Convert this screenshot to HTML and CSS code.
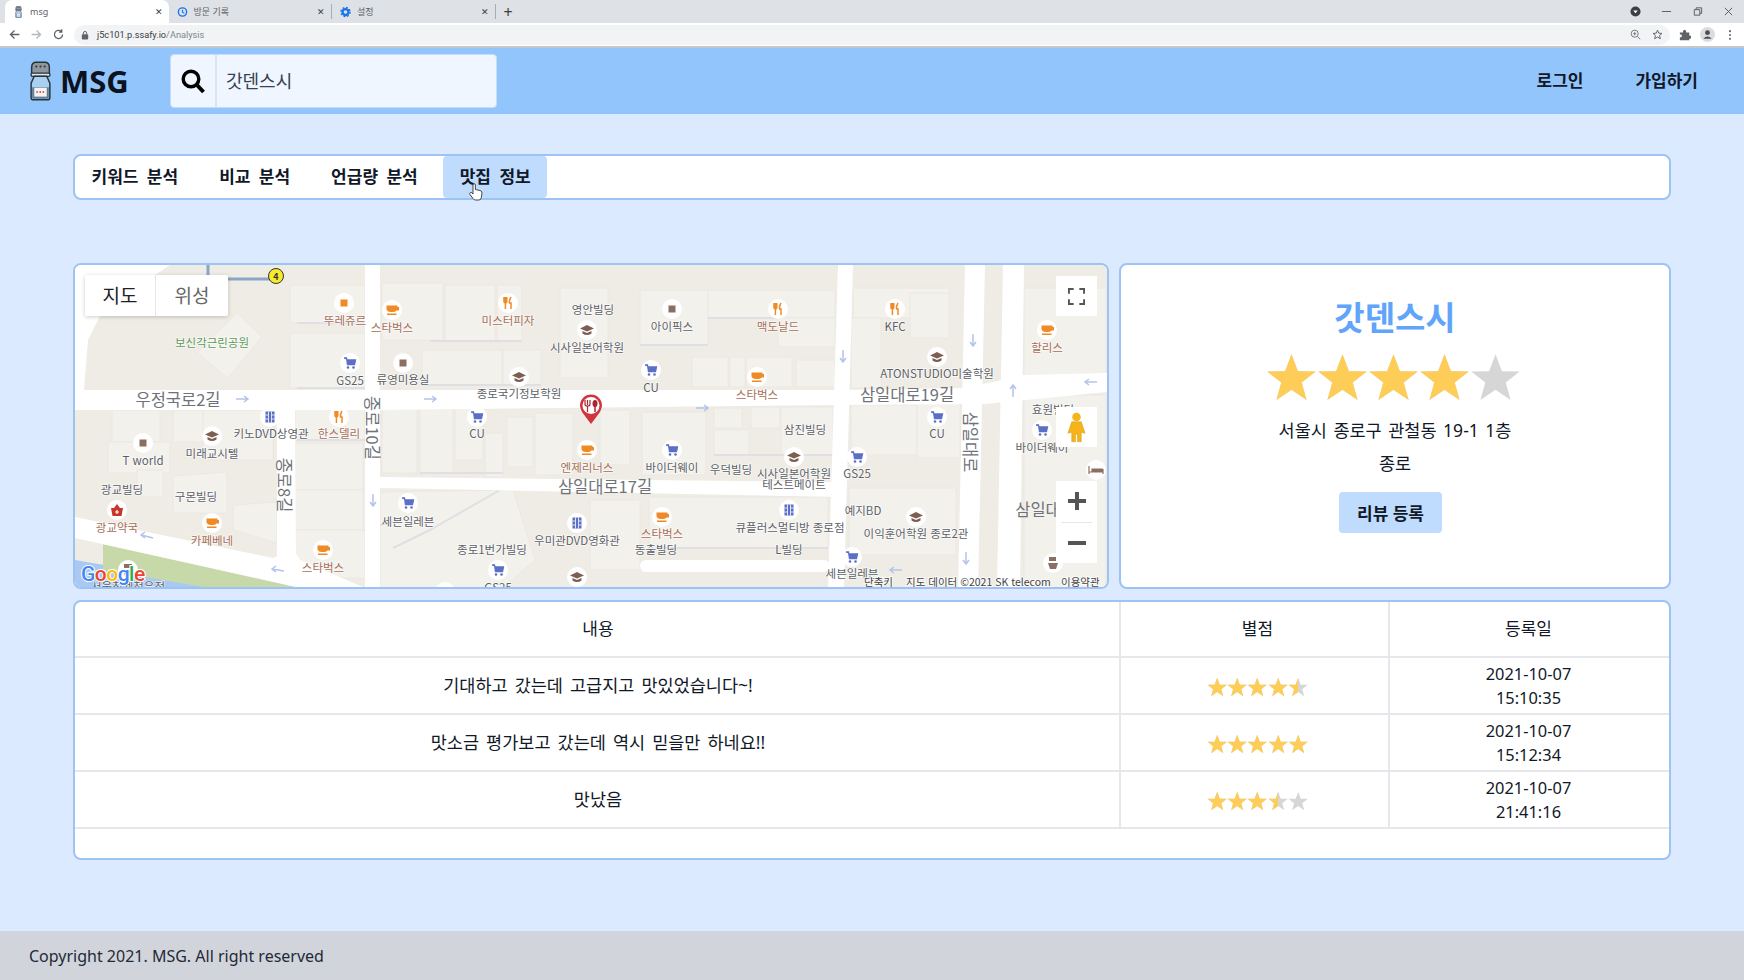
FILE: index.html
```html
<!DOCTYPE html>
<html lang="ko">
<head>
  <meta charset="UTF-8">
  <meta name="viewport" content="width=device-width, initial-scale=1.0">
  <title>msg</title>
  <link rel="stylesheet" href="styles.css">
</head>
<body>
  <svg class="defs" width="0" height="0">
    <defs>
      <g id="star"><polygon points="12,1 15,9 23.4,9.2 16.8,14.4 19.1,22.6 12,17.8 4.9,22.6 7.2,14.4 .6,9.2 9,9"/></g>
      <g id="shaker">
        <path d="M3.500 13V6Q3.500 1 8 1H16Q20.500 1 20.500 6V13Z" fill="#8f979e" stroke="#26343d" stroke-width="1.400"/>
        <rect x="3" y="11.500" width="18" height="3" rx="1" fill="#e3e6e9" stroke="#26343d" stroke-width="1.200"/>
        <path d="M6 14.500H18L21 21V35Q21 37 19 37H5Q3 37 3 35V21Z" fill="#a9d0f0" stroke="#26343d" stroke-width="1.400"/>
        <path d="M4 25H20V35Q20 36 19 36H5Q4 36 4 35Z" fill="#5f7f9a"/>
        <rect x="6" y="25.500" width="12" height="8.500" fill="#f8f3f1"/>
        <path d="M8 29.500H9.500M11 29.500H12.500M14 29.500H15.500" stroke="#c0392b" stroke-width="1.400"/>
        <circle cx="8" cy="5" r="1" fill="#26343d"/><circle cx="12" cy="5" r="1" fill="#26343d"/><circle cx="16" cy="5" r="1" fill="#26343d"/>
      </g>
      <g id="i-shop"><circle r="10" fill="#fff"/><rect x="-3.500" y="-3.500" width="7" height="7" fill="#8d6e63"/></g>
      <g id="i-shop-o"><circle r="10" fill="#fff"/><rect x="-3.500" y="-3.500" width="7" height="7" fill="#f08a24"/></g>
      <g id="i-food"><circle r="10" fill="#fff"/><path d="M-4-6V-1.500Q-4 0-2.600 0V6M-2.600-6V0M-1.200-6V-1.500Q-1.200 0-2.600 0M3-6Q1-3 1.500 0H3V6" fill="none" stroke="#f08a24" stroke-width="1.500"/></g>
      <g id="i-coffee"><circle r="10" fill="#fff"/><path d="M-5.500-4.500H5.500V-3H7V.5H4.500Q3.500 2-1 2Q-4.500 2-5.500-.5ZM-5 3.500H4.500V5H-5Z" fill="#f08a24"/></g>
      <g id="i-cart"><circle r="10" fill="#fff"/><path d="M-6-5H-3.500L-2.500 1.500H4.500L5.500-3H-3" fill="#5b6fc6" stroke="#5b6fc6" stroke-width="1.300"/><circle cx="-2" cy="4.500" r="1.300" fill="#5b6fc6"/><circle cx="3.500" cy="4.500" r="1.300" fill="#5b6fc6"/></g>
      <g id="i-edu"><circle r="10" fill="#fff"/><path d="M0-5L7-1.500L0 1.500L-7-1.500ZM-4.500 1V3.500Q0 6.500 4.500 3.500V1L0 3Z" fill="#7d5f52"/></g>
      <g id="i-film"><circle r="10" fill="#fff"/><rect x="-4.500" y="-5.500" width="9" height="11" fill="#5b6fc6"/><path d="M-1.500-5.500V5.500M1.500-5.500V5.500M-4.500-2H-1.500M-4.500 2H-1.500M1.500-2H4.500M1.500 2H4.500" stroke="#fff" stroke-width=".8"/></g>
      <g id="i-drug"><circle r="10" fill="#fff"/><path d="M-6-2H6L4.500 6H-4.500ZM-3-2L0-6L3-2" fill="#c8352b"/><path d="M0 0V4M-2 2H2" stroke="#fff" stroke-width="1.200"/></g>
      <g id="i-bed"><circle r="10" fill="#fff"/><path d="M-7-4V4M7-1V4M-7 2H7M-4-1H6V2H-4Z" fill="#8d6e63" stroke="#8d6e63" stroke-width="1.200"/></g>
      <g id="i-chef"><circle r="10" fill="#fff"/><path d="M-4-6H4V-2H-4ZM-5 0H5L3 6H-3Z" fill="#8d6e63"/></g>
    </defs>
  </svg>

  <div class="browser">
    <div class="tabs">
      <div class="tab tab-on">
        <svg class="fav" viewBox="0 0 24 38"><use href="#shaker"/></svg>
        <span class="tab-name">msg</span><span class="tab-x">&#x2715;</span>
      </div>
      <div class="tab tab-line">
        <svg class="fav" viewBox="0 0 24 24"><circle cx="12" cy="12" r="9" fill="none" stroke="#1a73e8" stroke-width="3"/><path d="M12 7V12.500L16 15" fill="none" stroke="#1a73e8" stroke-width="2.500"/></svg>
        <span class="tab-name">방문 기록</span><span class="tab-x">&#x2715;</span>
      </div>
      <div class="tab tab-line">
        <svg class="fav" viewBox="0 0 24 24"><circle cx="12" cy="12" r="6.500" fill="none" stroke="#1a73e8" stroke-width="5"/><circle cx="12" cy="12" r="10" fill="none" stroke="#1a73e8" stroke-width="3" stroke-dasharray="4 3.850"/></svg>
        <span class="tab-name">설정</span><span class="tab-x">&#x2715;</span>
      </div>
      <span class="tab-new">+</span>
      <span class="win-btns">
        <svg class="win-rec" viewBox="0 0 12 12"><circle cx="6" cy="6" r="5.500" fill="#3c4043"/><path d="M3.500 5H8.500L6 8Z" fill="#fff"/></svg>
        <svg viewBox="0 0 12 12"><path d="M1 6H11" stroke="#555" stroke-width="1"/></svg>
        <svg viewBox="0 0 12 12"><path d="M2.500 4H8.500V10H2.500ZM4.500 4V2H10.500V8H8.500" fill="none" stroke="#555" stroke-width="1"/></svg>
        <svg viewBox="0 0 12 12"><path d="M2 2L10 10M10 2L2 10" stroke="#555" stroke-width="1"/></svg>
      </span>
    </div>
    <div class="addr">
      <svg class="nav-ico" viewBox="0 0 16 16"><path d="M14 8H3M8 3L3 8L8 13" fill="none" stroke="#5f6368" stroke-width="1.600"/></svg>
      <svg class="nav-ico" viewBox="0 0 16 16"><path d="M2 8H13M8 3L13 8L8 13" fill="none" stroke="#b4b7bb" stroke-width="1.600"/></svg>
      <svg class="nav-ico" viewBox="0 0 16 16"><path d="M13 8A5 5 0 1 1 11.500 4.400M12 1.500V5H8.500" fill="none" stroke="#5f6368" stroke-width="1.600"/></svg>
      <div class="url-pill">
        <svg class="lock" viewBox="0 0 10 12"><rect x="1" y="5" width="8" height="6.500" rx="1" fill="#5f6368"/><path d="M3 5V3.500A2 2 0 0 1 7 3.500V5" fill="none" stroke="#5f6368" stroke-width="1.200"/></svg>
        <span class="url">j5c101.p.ssafy.io<span class="url-path">/Analysis</span></span>
        <svg class="pill-ico" viewBox="0 0 14 14"><circle cx="6" cy="6" r="4.500" fill="none" stroke="#70757a" stroke-width="1.200"/><path d="M9.500 9.500L13 13M4 6H8M6 4V8" stroke="#70757a" stroke-width="1.200"/></svg>
        <svg class="pill-ico" viewBox="0 0 14 14"><polygon points="7,1.500 8.600,5.300 12.700,5.600 9.600,8.300 10.600,12.400 7,10.200 3.400,12.400 4.400,8.300 1.300,5.600 5.400,5.300" fill="none" stroke="#5f6368" stroke-width="1.200"/></svg>
      </div>
      <svg class="ext" viewBox="0 0 14 14"><path d="M1 4H4.500Q4.500 1 6.500 1T8.500 4H12V7.500Q14.500 7.500 14.500 9.500T12 11.500V13H1V10Q3.500 10 3.500 8T1 6Z" fill="#5f6368"/></svg>
      <svg class="avatar" viewBox="0 0 16 16"><circle cx="8" cy="8" r="8" fill="#dadce0"/><circle cx="8" cy="6" r="2.600" fill="#4a4d51"/><path d="M3.500 12.500Q8 8 12.500 12.500Z" fill="#4a4d51"/></svg>
      <svg class="kebab" viewBox="0 0 4 14"><circle cx="2" cy="2.500" r="1.200" fill="#5f6368"/><circle cx="2" cy="7" r="1.200" fill="#5f6368"/><circle cx="2" cy="11.500" r="1.200" fill="#5f6368"/></svg>
    </div>
  </div>

  <header class="site-head">
    <a class="logo">
      <svg class="logo-ico" viewBox="0 0 24 38"><use href="#shaker"/></svg>
      <span>MSG</span>
    </a>
    <div class="search">
      <span class="search-btn">
        <svg viewBox="0 0 24 25"><circle cx="10" cy="10" r="7.800" fill="none" stroke="#000" stroke-width="3.400"/><path d="M15.500 15.500L22.500 23" stroke="#000" stroke-width="4"/></svg>
      </span>
      <span class="search-text">갓덴스시</span>
    </div>
    <nav class="auth">
      <a>로그인</a>
      <a>가입하기</a>
    </nav>
  </header>

  <main class="content">
    <div class="menu card">
      <a class="menu-item">키워드 분석</a>
      <a class="menu-item">비교 분석</a>
      <a class="menu-item">언급량 분석</a>
      <a class="menu-item menu-on">맛집 정보</a>
      <svg class="hand" viewBox="0 0 14 18"><path d="M4 9V2Q4 .7 5.200 .7T6.400 2V6.500L11 7.500Q13 8 13 10L12.300 14.500Q12 17 10 17H6.500Q5 17 4 15.500L1 11.500Q.3 10 1.500 9.500T4 11Z" fill="#fff" stroke="#333" stroke-width=".9"/></svg>
    </div>

    <section class="top-row">
      <div class="map card">
        <svg class="map-svg" viewBox="75 265 1032 322">
          <rect x="75" y="265" width="1032" height="322" fill="#efece5"/>

          <!-- 건물 -->
          <g class="blocks">
            <rect x="290" y="285" width="75" height="38"/><rect x="290" y="333" width="75" height="55"/>
            <rect x="382" y="283" width="61" height="57"/><rect x="445" y="285" width="50" height="57"/>
            <rect x="497" y="285" width="25" height="57"/><rect x="422" y="350" width="80" height="35"/>
            <rect x="503" y="350" width="38" height="35"/><polygon points="197,353 237,313 262,337 228,378"/>
            <rect x="112" y="410" width="48" height="32"/><rect x="108" y="442" width="62" height="31"/>
            <rect x="173" y="410" width="30" height="32"/><rect x="203" y="410" width="70" height="50"/>
            <rect x="137" y="470" width="26" height="27"/><polygon points="173,476 227,472 227,513 173,513"/>
            <polygon points="233,505 277,502 277,543 233,530"/><rect x="295" y="407" width="70" height="33"/>
            <rect x="295" y="443" width="68" height="47"/><rect x="295" y="490" width="68" height="40"/>
            <rect x="295" y="530" width="70" height="48"/><rect x="382" y="405" width="35" height="68"/>
            <rect x="420" y="405" width="33" height="68"/><rect x="455" y="405" width="28" height="55"/>
            <rect x="485" y="433" width="18" height="44"/><rect x="507" y="417" width="26" height="50"/>
            <rect x="535" y="413" width="38" height="62"/><polygon points="380,492 513,490 535,560 500,590 380,590"/>
            <rect x="640" y="290" width="68" height="55"/><rect x="708" y="290" width="127" height="28"/>
            <rect x="778" y="318" width="57" height="29"/><rect x="692" y="357" width="36" height="30"/>
            <rect x="730" y="357" width="15" height="30"/><rect x="746" y="357" width="46" height="30"/>
            <rect x="796" y="360" width="39" height="27"/><rect x="560" y="288" width="48" height="90"/>
            <rect x="642" y="412" width="64" height="63"/><rect x="714" y="408" width="28" height="20"/>
            <rect x="714" y="430" width="35" height="25"/><rect x="751" y="407" width="29" height="21"/>
            <rect x="781" y="407" width="52" height="48"/><rect x="851" y="405" width="66" height="50"/>
            <rect x="917" y="402" width="43" height="56"/><rect x="853" y="288" width="96" height="30"/>
            <rect x="910" y="293" width="39" height="45"/><rect x="851" y="318" width="30" height="70"/>
            <rect x="1024" y="288" width="82" height="90"/><rect x="1024" y="395" width="82" height="195"/>
            <rect x="649" y="497" width="179" height="51"/><rect x="849" y="488" width="107" height="67"/>
            <rect x="600" y="410" width="30" height="55"/><rect x="590" y="500" width="50" height="70"/>
          </g>
          <g class="shades">
            <path d="M297 323H365M430 341H522M422 385H541M297 388H365M708 318H775M640 345H708M297 440H365M420 473H503M714 455H833M1024 378H1100M649 548H828"/>
            <path d="M393 548L430 530M430 530L500 490M380 525L400 520"/>
          </g>

          <!-- 길 -->
          <polygon class="water" points="75,560 240,588 75,588"/>
          <polygon class="grass" points="103,544 300,588 210,588 103,570"/>
          <g class="roads">
            <polygon points="75,265 170,265 103,310 88,340 84,390 75,390"/>
            <polygon points="75,390 840,390 965,388 1024,375 1107,373 1107,392 985,404 840,405 370,410 75,410"/>
            <polygon points="75,517 273,558 293,548 300,560 370,590 310,590 75,538"/>
            <polygon points="277,405 295,405 296,560 277,558"/>
            <polygon points="365,265 380,265 380,590 365,590"/>
            <polygon points="380,477 840,482 840,497 380,488"/>
            <polygon points="838,265 853,265 844,590 828,590"/>
            <polygon points="965,265 985,265 978,590 958,590"/>
            <polygon points="1003,265 1024,265 1020,590 997,590"/>
            <rect x="640" y="560" width="190" height="12" rx="6"/>
          </g>
          <path class="route" d="M208 265V279H276"/>
          <circle cx="276" cy="276" r="7.500" fill="#f7e92e" stroke="#333" stroke-width="1"/>
          <text class="lbl route-num" x="276" y="276">4</text>

          <!-- 일방통행 화살표 -->
          <g class="arrows">
            <path d="M236 399H248M244 396L248 399L244 402M424 399H436M432 396L436 399L432 402M696 408H708M704 405L708 408L704 411"/>
            <path d="M843 350V362M840 358L843 362L846 358M973 334V346M970 342L973 346L976 342M373 494V506M370 502L373 506L376 502M966 552V564M963 560L966 564L969 560"/>
            <path d="M1013 397V385M1010 389L1013 385L1016 389M1097 382H1085M1089 379L1085 382L1089 385M153 538L141 535M145 532L141 535L145 538M284 571L272 569M276 566L272 569L276 572M902 570H890M894 567L890 570L894 573"/>
          </g>

          <!-- 아이콘 -->
          <use href="#i-shop-o" x="344" y="303"/><use href="#i-coffee" x="392" y="310"/><use href="#i-food" x="508" y="303"/>
          <use href="#i-cart" x="350" y="363"/><use href="#i-shop" x="403" y="363"/><use href="#i-edu" x="519" y="377"/>
          <use href="#i-film" x="270" y="417"/><use href="#i-food" x="339" y="417"/><use href="#i-cart" x="477" y="417"/>
          <use href="#i-edu" x="212" y="436"/><use href="#i-shop" x="143" y="443"/><use href="#i-drug" x="117" y="510"/>
          <use href="#i-coffee" x="212" y="523"/><use href="#i-cart" x="408" y="503"/><use href="#i-coffee" x="323" y="550"/>
          <use href="#i-cart" x="498" y="570"/><use href="#i-chef" x="128" y="570"/><use href="#i-coffee" x="445" y="592"/>
          <use href="#i-edu" x="577" y="577"/><use href="#i-shop" x="672" y="309"/><use href="#i-food" x="778" y="309"/>
          <use href="#i-food" x="895" y="309"/><use href="#i-edu" x="587" y="330"/><use href="#i-cart" x="651" y="370"/>
          <use href="#i-coffee" x="757" y="377"/><use href="#i-edu" x="937" y="357"/><use href="#i-coffee" x="1047" y="330"/>
          <use href="#i-cart" x="937" y="417"/><use href="#i-cart" x="1042" y="430"/><use href="#i-coffee" x="587" y="450"/>
          <use href="#i-cart" x="672" y="450"/><use href="#i-edu" x="794" y="457"/><use href="#i-cart" x="857" y="457"/>
          <use href="#i-film" x="789" y="510"/><use href="#i-film" x="577" y="523"/><use href="#i-coffee" x="662" y="517"/>
          <use href="#i-edu" x="916" y="517"/><use href="#i-cart" x="852" y="557"/><use href="#i-bed" x="1096" y="470"/>
          <use href="#i-chef" x="1053" y="563"/>

          <!-- 라벨 -->
          <g class="lbl">
            <text x="350" y="380">GS25</text><text x="403" y="379">류영미용실</text><text x="519" y="393">종로국기정보학원</text>
            <text x="271" y="433">키노DVD상영관</text><text x="477" y="433">CU</text><text x="212" y="453">미래교시텔</text>
            <text x="143" y="460">T world</text><text x="122" y="489">광교빌딩</text><text x="196" y="496">구몬빌딩</text>
            <text x="408" y="521">세븐일레븐</text><text x="492" y="549">종로1번가빌딩</text><text x="577" y="540">우미관DVD영화관</text>
            <text x="498" y="587">GS25</text><text x="128" y="586">서울청계천우정</text><text x="593" y="309">영안빌딩</text>
            <text x="672" y="326">아이픽스</text><text x="895" y="326">KFC</text><text x="587" y="347">시사일본어학원</text>
            <text x="651" y="387">CU</text><text x="937" y="373">ATONSTUDIO미술학원</text><text x="937" y="433">CU</text>
            <text x="1053" y="409">효원빌딩</text><text x="1042" y="447">바이더웨이</text><text x="805" y="429">삼진빌딩</text>
            <text x="672" y="467">바이더웨이</text><text x="731" y="469">우덕빌딩</text><text x="794" y="473">시사일본어학원</text>
            <text x="794" y="484">테스트메이트</text><text x="857" y="473">GS25</text><text x="863" y="510">예지BD</text>
            <text x="656" y="549">동출빌딩</text><text x="790" y="527">큐플러스멀티방 종로점</text><text x="916" y="533">이익훈어학원 종로2관</text>
            <text x="789" y="549">L빌딩</text><text x="852" y="573">세븐일레븐</text>
          </g>
          <g class="lbl lbl-food">
            <text x="345" y="320">뚜레쥬르</text><text x="392" y="327">스타벅스</text><text x="508" y="320">미스터피자</text>
            <text x="339" y="433">한스델리</text><text x="117" y="527">광교약국</text><text x="212" y="540">카페베네</text>
            <text x="323" y="567">스타벅스</text><text x="778" y="326">맥도날드</text><text x="1047" y="347">할리스</text>
            <text x="757" y="394">스타벅스</text><text x="587" y="467">엔제리너스</text><text x="662" y="533">스타벅스</text>
          </g>
          <text class="lbl lbl-park" x="212" y="342">보신각근린공원</text>
          <g class="lbl lbl-road">
            <text x="178" y="399">우정국로2길</text><text x="907" y="394">삼일대로19길</text>
            <text x="605" y="486">삼일대로17길</text><text x="1038" y="509">삼일대</text>
            <text transform="translate(373 428) rotate(90)">종로10길</text>
            <text transform="translate(285 485) rotate(90)">종로8길</text>
            <text transform="translate(971 442) rotate(90)">삼일대로</text>
          </g>

          <!-- 핀 -->
          <path d="M591 424L582 412Q580 408 580 405.500A11 11 0 0 1 602 405.500Q602 408 600 412Z" fill="#d0343c"/>
          <circle cx="591" cy="405.500" r="8.500" fill="#fff"/>
          <path d="M585 400V404Q585 406 587 406H587.500V412M590 400V404Q590 406 588 406M587.500 400V405" fill="none" stroke="#a9262e" stroke-width="1.200"/>
          <path d="M595 406V412" stroke="#a9262e" stroke-width="1.500"/>
          <ellipse cx="595" cy="403.500" rx="2.500" ry="3.500" fill="#a9262e"/>

          <text class="g-logo" y="581"><tspan x="81" fill="#4285f4">G</tspan><tspan fill="#ea4335">o</tspan><tspan fill="#fbbc05">o</tspan><tspan fill="#4285f4">g</tspan><tspan fill="#34a853">l</tspan><tspan fill="#ea4335">e</tspan></text>

          <g class="attr">
            <text x="864" y="581">단축키</text>
            <text x="906" y="581">지도 데이터 ©2021 SK telecom</text>
            <text x="1061" y="581">이용약관</text>
          </g>
        </svg>

        <div class="map-type">
          <span class="map-type-on">지도</span>
          <span>위성</span>
        </div>
        <button class="map-btn map-full">
          <svg viewBox="0 0 18 18"><path d="M1 6V1H6M12 1H17V6M17 12V17H12M6 17H1V12" fill="none" stroke="#555" stroke-width="2"/></svg>
        </button>
        <button class="map-btn map-peg">
          <svg viewBox="0 0 20 32"><circle cx="10" cy="5" r="4.500" fill="#f4b41a"/><path d="M5 10H15L19 22L15 21V31H11V23H9V31H5V21L1 22Z" fill="#f4b41a" stroke="#d39512" stroke-width=".5"/></svg>
        </button>
        <div class="map-zoom">
          <button class="map-z"><svg viewBox="0 0 18 18"><path d="M9 0V18M0 9H18" stroke="#555" stroke-width="4"/></svg></button>
          <button class="map-z map-z-low"><svg viewBox="0 0 18 18"><path d="M0 9H18" stroke="#555" stroke-width="4"/></svg></button>
        </div>
      </div>

      <div class="info card">
        <h2 class="info-name">갓덴스시</h2>
        <div class="stars stars-big">
          <div class="star-row star-off"><svg viewBox="0 0 24 24"><use href="#star"/></svg><svg viewBox="0 0 24 24"><use href="#star"/></svg><svg viewBox="0 0 24 24"><use href="#star"/></svg><svg viewBox="0 0 24 24"><use href="#star"/></svg><svg viewBox="0 0 24 24"><use href="#star"/></svg></div>
          <div class="star-fill" style="width: 80%"><div class="star-row star-on"><svg viewBox="0 0 24 24"><use href="#star"/></svg><svg viewBox="0 0 24 24"><use href="#star"/></svg><svg viewBox="0 0 24 24"><use href="#star"/></svg><svg viewBox="0 0 24 24"><use href="#star"/></svg><svg viewBox="0 0 24 24"><use href="#star"/></svg></div></div>
        </div>
        <p class="info-line">서울시 종로구 관철동 19-1 1층</p>
        <p class="info-line">종로</p>
        <button class="review-btn">리뷰 등록</button>
      </div>
    </section>

    <section class="reviews card">
      <table class="review-table">
        <colgroup><col class="col-text"><col class="col-star"><col class="col-date"></colgroup>
        <thead>
          <tr><th>내용</th><th>별점</th><th>등록일</th></tr>
        </thead>
        <tbody>
          <tr>
            <td class="review-text">기대하고 갔는데 고급지고 맛있었습니다~!</td>
            <td>
              <div class="stars">
                <div class="star-row star-off"><svg viewBox="0 0 24 24"><use href="#star"/></svg><svg viewBox="0 0 24 24"><use href="#star"/></svg><svg viewBox="0 0 24 24"><use href="#star"/></svg><svg viewBox="0 0 24 24"><use href="#star"/></svg><svg viewBox="0 0 24 24"><use href="#star"/></svg></div>
                <div class="star-fill" style="width: 90%"><div class="star-row star-on"><svg viewBox="0 0 24 24"><use href="#star"/></svg><svg viewBox="0 0 24 24"><use href="#star"/></svg><svg viewBox="0 0 24 24"><use href="#star"/></svg><svg viewBox="0 0 24 24"><use href="#star"/></svg><svg viewBox="0 0 24 24"><use href="#star"/></svg></div></div>
              </div>
            </td>
            <td class="review-date">2021-10-07<br>15:10:35</td>
          </tr>
          <tr>
            <td class="review-text">맛소금 평가보고 갔는데 역시 믿을만 하네요!!</td>
            <td>
              <div class="stars">
                <div class="star-row star-off"><svg viewBox="0 0 24 24"><use href="#star"/></svg><svg viewBox="0 0 24 24"><use href="#star"/></svg><svg viewBox="0 0 24 24"><use href="#star"/></svg><svg viewBox="0 0 24 24"><use href="#star"/></svg><svg viewBox="0 0 24 24"><use href="#star"/></svg></div>
                <div class="star-fill" style="width: 100%"><div class="star-row star-on"><svg viewBox="0 0 24 24"><use href="#star"/></svg><svg viewBox="0 0 24 24"><use href="#star"/></svg><svg viewBox="0 0 24 24"><use href="#star"/></svg><svg viewBox="0 0 24 24"><use href="#star"/></svg><svg viewBox="0 0 24 24"><use href="#star"/></svg></div></div>
              </div>
            </td>
            <td class="review-date">2021-10-07<br>15:12:34</td>
          </tr>
          <tr>
            <td class="review-text">맛났음</td>
            <td>
              <div class="stars">
                <div class="star-row star-off"><svg viewBox="0 0 24 24"><use href="#star"/></svg><svg viewBox="0 0 24 24"><use href="#star"/></svg><svg viewBox="0 0 24 24"><use href="#star"/></svg><svg viewBox="0 0 24 24"><use href="#star"/></svg><svg viewBox="0 0 24 24"><use href="#star"/></svg></div>
                <div class="star-fill" style="width: 70%"><div class="star-row star-on"><svg viewBox="0 0 24 24"><use href="#star"/></svg><svg viewBox="0 0 24 24"><use href="#star"/></svg><svg viewBox="0 0 24 24"><use href="#star"/></svg><svg viewBox="0 0 24 24"><use href="#star"/></svg><svg viewBox="0 0 24 24"><use href="#star"/></svg></div></div>
              </div>
            </td>
            <td class="review-date">2021-10-07<br>21:41:16</td>
          </tr>
        </tbody>
      </table>
    </section>
  </main>

  <footer class="site-foot">Copyright 2021. MSG. All right reserved</footer>
</body>
</html>
```

FILE: styles.css
```css
* {
  box-sizing: border-box;
}
body {
  margin: 0;
  height: 980px;
  display: flex;
  flex-direction: column;
  overflow: hidden;
  background-color: #dbeafe;
  color: #111827;
  font-family: "Noto Sans", "Noto Sans CJK KR", sans-serif;
  font-size: 16px;
}
.defs {
  position: absolute;
}
p, h2 {
  margin: 0;
}

/* 브라우저 상단 */
.browser {
  flex: none;
  height: 48px;
  background-color: #fff;
  border-bottom: 2px solid #c4c7cb;
}
.tabs {
  height: 23px;
  display: flex;
  align-items: center;
  padding-left: 5px;
  background-color: #dee1e6;
}
.tab {
  width: 163.500px;
  height: 23px;
  display: flex;
  align-items: center;
  padding: 0 3px 0 8px;
  font-size: 9px;
  color: #5f6368;
}
.tab-on {
  background-color: #fff;
  border-radius: 7px 7px 0 0;
}
.tab-line {
  height: 15px;
  border-right: 1px solid #a9adb2;
}
.fav {
  width: 11px;
  height: 12px;
  margin-right: 6px;
}
.tab-name {
  flex: 1;
}
.tab-x {
  font-size: 9px;
  color: #3c4043;
  margin-right: 3px;
}
.tab-new {
  margin-left: 8px;
  font-size: 16px;
  line-height: 1;
  color: #3c4043;
}
.win-btns {
  margin-left: auto;
  margin-right: 10px;
  display: flex;
  align-items: center;
  gap: 20px;
}
.win-btns svg {
  width: 11px;
  height: 11px;
}
.addr {
  height: 23px;
  display: flex;
  align-items: center;
  padding-left: 8px;
}
.nav-ico {
  width: 13px;
  height: 13px;
  margin-right: 9px;
}
.url-pill {
  width: 1596px;
  height: 20px;
  display: flex;
  align-items: center;
  padding: 0 7px;
  background-color: #f1f3f4;
  border-radius: 10px;
  font-family: "Roboto", sans-serif;
  font-size: 9.200px;
  color: #3c4043;
}
.lock {
  width: 8px;
  height: 10px;
  margin-right: 8px;
}
.url {
  flex: 1;
}
.url-path {
  color: #80868b;
}
.pill-ico {
  width: 11px;
  height: 11px;
  margin-left: 11px;
}
.ext {
  width: 12px;
  height: 12px;
  margin-left: 9px;
}
.avatar {
  width: 15px;
  height: 15px;
  margin-left: 9px;
}
.kebab {
  width: 4px;
  height: 12px;
  margin-left: 13px;
}

/* 헤더 */
.site-head {
  flex: none;
  height: 66px;
  display: flex;
  align-items: center;
  padding: 0 46px 0 28px;
  background-color: #93c5fd;
}
.logo {
  display: flex;
  align-items: center;
  width: 142px;
  gap: 7px;
  font-size: 31px;
  font-weight: 700;
  color: #0b1220;
}
.logo-ico {
  width: 25px;
  height: 40px;
}
.search {
  width: 327px;
  height: 54px;
  display: flex;
  background-color: #eff6ff;
  border: 1px solid #c6dcf7;
  border-radius: 4px;
}
.search-btn {
  width: 46px;
  display: flex;
  align-items: center;
  justify-content: center;
  border-right: 2px solid #d9e4f1;
}
.search-btn svg {
  width: 24px;
  height: 25px;
}
.search-text {
  align-self: center;
  margin: 0 0 3px 9px;
  font-size: 18px;
  color: #374151;
}
.auth {
  margin-left: auto;
  padding-bottom: 3px;
  display: flex;
  gap: 52px;
  font-size: 17px;
  font-weight: 700;
}

/* 본문 */
.content {
  flex: 1;
  padding: 40px 73px 0 73px;
}
.card {
  background-color: #fff;
  border: 2px solid #9dc3f5;
  border-radius: 8px;
}
.menu {
  position: relative;
  height: 46px;
  display: flex;
  gap: 8px;
}
.menu-item {
  padding: 0 16.500px;
  font-size: 17px;
  font-weight: 700;
  line-height: 42px;
  word-spacing: 4px;
}
.menu-on {
  margin-left: 1px;
  background-color: #bfdbfe;
  border-radius: 4px;
}
.hand {
  position: absolute;
  left: 394px;
  top: 27px;
  width: 14px;
  height: 18px;
}
.top-row {
  display: flex;
  gap: 10px;
  margin-top: 63px;
  height: 326px;
}
.map {
  position: relative;
  width: 1036px;
  overflow: hidden;
}
.map-svg {
  display: block;
  width: 1032px;
  height: 322px;
}
.blocks {
  fill: #f3f1ec;
  stroke: #ece8e1;
  stroke-width: 1;
}
.shades {
  fill: none;
  stroke: #e0dfe4;
  stroke-width: 2;
}
.roads {
  fill: #fff;
}
.water {
  fill: #a9c9f2;
}
.grass {
  fill: #c8d9a9;
}
.route {
  fill: none;
  stroke: #89a6c8;
  stroke-width: 3;
}
.arrows {
  fill: none;
  stroke: #b5c3ea;
  stroke-width: 1.500;
}
.lbl {
  fill: #5b6168;
  font-family: "Noto Sans CJK KR", sans-serif;
  font-size: 11.500px;
  text-anchor: middle;
  dominant-baseline: central;
  paint-order: stroke;
  stroke: #fff;
  stroke-width: 1.500px;
  stroke-opacity: .7;
}
.route-num {
  fill: #333;
  stroke: none;
  font-size: 9px;
  font-weight: 700;
}
.lbl-food {
  fill: #a56f58;
}
.lbl-park {
  fill: #5d9a5a;
}
.lbl-road {
  fill: #6f7378;
  font-size: 16.500px;
  stroke: none;
}
.g-logo {
  font-family: "Roboto", sans-serif;
  font-size: 21px;
  font-weight: 500;
  paint-order: stroke;
  stroke: #fff;
  stroke-width: 2px;
  letter-spacing: -.5px;
}
.attr {
  fill: #444;
  font-family: "Noto Sans CJK KR", sans-serif;
  font-size: 10.500px;
  dominant-baseline: central;
  paint-order: stroke;
  stroke: #fff;
  stroke-width: 2px;
  stroke-opacity: .7;
}
.map-type {
  position: absolute;
  left: 10px;
  top: 10px;
  width: 143px;
  height: 41px;
  display: flex;
  background-color: #fff;
  border-radius: 2px;
  box-shadow: 0 1px 4px rgba(0, 0, 0, .2);
  font-size: 19px;
  line-height: 42px;
  text-align: center;
  color: #666;
}
.map-type span {
  flex: 1;
}
.map-type .map-type-on {
  flex: none;
  width: 71px;
  color: #222;
  border-right: 1px solid #e6e6e6;
}
.map-btn {
  position: absolute;
  left: 981px;
  width: 41px;
  height: 40px;
  padding: 0;
  border: none;
  background-color: #fff;
  display: flex;
  align-items: center;
  justify-content: center;
}
.map-full {
  top: 11px;
}
.map-full svg {
  width: 17px;
  height: 17px;
}
.map-peg {
  top: 142px;
}
.map-peg svg {
  width: 19px;
  height: 31px;
}
.map-zoom {
  position: absolute;
  left: 981px;
  top: 216px;
  width: 41px;
  height: 82px;
  display: flex;
  flex-direction: column;
  background-color: #fff;
}
.map-z {
  flex: 1;
  padding: 0;
  border: none;
  background: none;
  display: flex;
  align-items: center;
  justify-content: center;
}
.map-z svg {
  width: 18px;
  height: 18px;
}
.map-z-low {
  border-top: 1px solid #e6e6e6;
  margin: 0 5px;
}

/* 가게 정보 */
.info {
  flex: 1;
  display: flex;
  flex-direction: column;
  align-items: center;
  padding-top: 31px;
}
.info-name {
  font-size: 33px;
  font-weight: 700;
  line-height: 44px;
  color: #60a5fa;
}
.stars {
  position: relative;
  width: 102px;
  margin: 0 auto;
}
.stars-big {
  left: -2px;
  width: 255px;
  margin-top: 12px;
}
.star-row {
  display: flex;
  width: 102px;
}
.stars-big .star-row {
  width: 255px;
}
.star-row svg {
  flex: none;
  width: 20.400px;
  height: 20.400px;
}
.stars-big .star-row svg {
  width: 51px;
  height: 51px;
}
.star-off {
  fill: #d6d6d6;
}
.star-on {
  fill: #fdcd57;
}
.star-fill {
  position: absolute;
  left: 0;
  top: 0;
  overflow: hidden;
}
.info-line {
  font-size: 17.500px;
  line-height: 32px;
  word-spacing: 2px;
}
.stars-big + .info-line {
  margin-top: 11px;
}
.info-line + .info-line {
  margin-top: 1px;
}
.review-btn {
  height: 41px;
  width: 103px;
  margin: 13px 9px 0 0;
  border: none;
  border-radius: 4px;
  background-color: #bfdbfe;
  color: #111827;
  font-family: inherit;
  font-size: 17px;
  font-weight: 700;
}

/* 리뷰 목록 */
.reviews {
  height: 260px;
  margin-top: 11px;
}
.review-table {
  width: 100%;
  border-collapse: collapse;
  table-layout: fixed;
  text-align: center;
}
.col-text {
  width: 1045px;
}
.col-star {
  width: 269px;
}
.review-table th, .review-table td {
  border: 2px solid #e5e7eb;
  padding: 0;
  font-weight: 400;
  line-height: 24px;
}
.review-table th {
  border-top: none;
  height: 55px;
  font-size: 17px;
}
.review-table td {
  height: 57px;
}
.review-table tr > :first-child {
  padding-left: 2px;
}
.review-table tr > :nth-child(2) {
  padding-left: 6px;
}
.review-table tr > :last-child {
  padding-right: 2px;
}
.review-table tr > :first-child {
  border-left: none;
}
.review-table tr > :last-child {
  border-right: none;
}
.review-table td .stars {
  top: 2px;
}
.review-table .review-text {
  padding-bottom: 2px;
  font-size: 17.500px;
  word-spacing: 2.500px;
}
.review-table .review-date {
  font-size: 16.400px;
}

.site-foot {
  flex: none;
  height: 49px;
  padding-left: 29px;
  line-height: 51px;
  background-color: #d1d5db;
  color: #1f2937;
}
```
